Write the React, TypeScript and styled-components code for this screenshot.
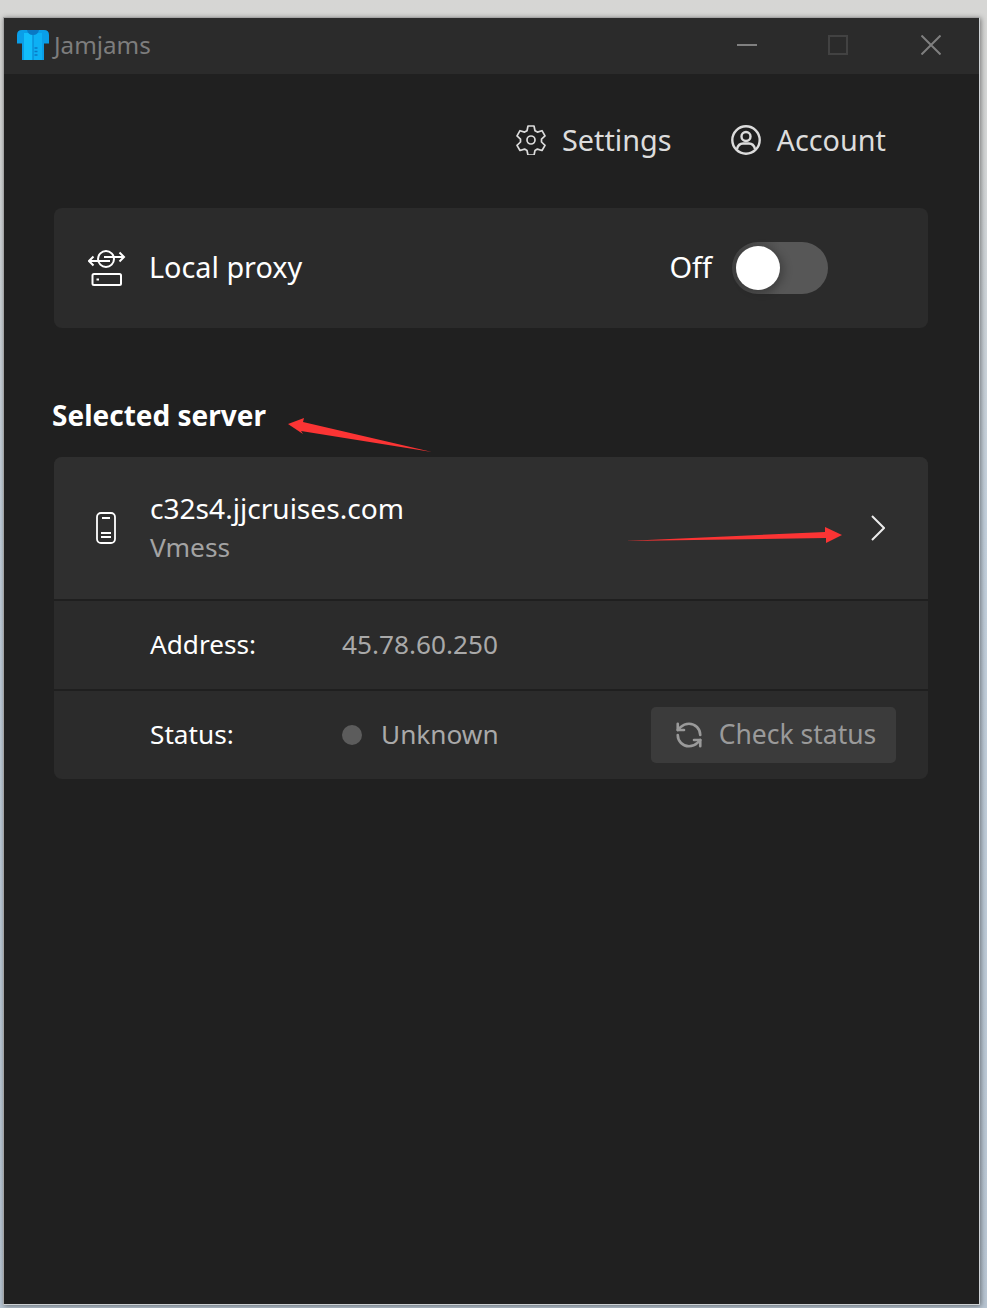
import { createGlobalStyle, styled } from 'styled-components'
import { RefreshCw } from 'lucide-react'

const GlobalStyle = createGlobalStyle`
  html, body {
    margin: 0;
    padding: 0;
  }
  body {
    font-family: "Noto Sans", "Open Sans", sans-serif;
    background: linear-gradient(180deg, #d6d6d4 0%, #d4d6d6 12%, #c2cfdb 40%, #b8c5d2 100%);
  }
`

const Backdrop = styled.div`
  box-sizing: border-box;
  width: 987px;
  height: 1308px;
  padding: 17px 7px 3px 3px;
  overflow: hidden;
`

const Window = styled.div`
  position: relative;
  box-sizing: border-box;
  height: 100%;
  border: 1px solid #a4a4a4;
  border-right-color: #cfd3d6;
  border-bottom-color: #cfd3d6;
  background: #202020;
  box-shadow: 1px 1px 5px rgba(0, 0, 0, 0.45);
  display: flex;
  flex-direction: column;
`

const TitleBar = styled.header`
  box-sizing: border-box;
  height: 56px;
  flex: none;
  background: #2b2b2b;
  display: flex;
  align-items: center;
  padding: 0 0 2px 13px;
`

const AppName = styled.span`
  margin: 0 0 2px 5px;
  font-size: 24.2px;
  color: #7d7d7d;
`

const WindowControls = styled.div`
  margin-left: auto;
  display: flex;
  align-items: center;
  padding-right: 38px;
  gap: 71px;
`

const CloseSlot = styled.div`
  display: flex;
  margin-left: 2px;
`

const Nav = styled.nav`
  box-sizing: border-box;
  display: flex;
  justify-content: flex-end;
  align-items: center;
  height: 134px;
  padding: 0 93px 2px 0;
  gap: 59px;
  flex: none;
`

const NavItem = styled.div`
  display: flex;
  align-items: center;
  gap: 16px;
  font-size: 28.8px;
  color: #dcdcdc;
`

const NavLabel = styled.span`
  margin-bottom: 2px;
`

const Main = styled.main`
  padding: 0 51px 0 50px;
  display: flex;
  flex-direction: column;
`

const Card = styled.section`
  border-radius: 8px;
  overflow: hidden;
  background: #2b2b2b;
`

const ProxyRow = styled.div`
  height: 120px;
  display: flex;
  align-items: center;
  padding: 0 100px 0 34px;
`

const RowLabel = styled.span`
  margin: 0 0 4px 23px;
  font-size: 28.8px;
  color: #ffffff;
`

const ToggleState = styled.span`
  margin: 0 20px 4px auto;
  font-size: 29px;
  color: #ffffff;
`

const Toggle = styled.div`
  width: 96px;
  height: 52px;
  box-sizing: border-box;
  border-radius: 26px;
  padding: 4px;
  background: linear-gradient(90deg, #3f3f3f 0%, #575757 50%);
`

const ToggleKnob = styled.div`
  width: 44px;
  height: 44px;
  border-radius: 50%;
  background: #ffffff;
  box-shadow: 4px 2px 8px rgba(0, 0, 0, 0.25);
`

const SectionTitle = styled.h2`
  margin: 66px 0 20px -2px;
  height: 43px;
  line-height: 43px;
  font-size: 28px;
  font-weight: 700;
  color: #ffffff;
`

const ServerRow = styled.div`
  height: 142px;
  background: #2f2f2f;
  display: flex;
  align-items: center;
  padding: 0 43px 0 42px;
`

const ServerText = styled.div`
  margin: 0 0 3px 34px;
  display: flex;
  flex-direction: column;
`

const ServerName = styled.div`
  font-size: 28.1px;
  line-height: 40px;
  color: #ffffff;
`

const ServerProtocol = styled.div`
  font-size: 26.3px;
  line-height: 38px;
  color: #a3a3a3;
`

const ChevronWrap = styled.div`
  margin-left: auto;
  display: flex;
`

const DetailRow = styled.div`
  border-top: 2px solid #1f1f1f;
  height: 88px;
  display: flex;
  align-items: center;
  padding: 0 32px 0 96px;
`

const DetailLabel = styled.span`
  width: 192px;
  flex: none;
  margin-bottom: 2px;
  font-size: 26.2px;
  color: #ffffff;
`

const DetailValue = styled.span`
  margin-bottom: 2px;
  font-size: 26.2px;
  color: #a9a9a9;
`

const StatusDot = styled.span`
  width: 20px;
  height: 20px;
  border-radius: 50%;
  background: #5c5c5c;
  margin-right: 19px;
  flex: none;
`

const CheckButton = styled.button`
  margin-left: auto;
  height: 56px;
  width: 245px;
  border: 0;
  border-radius: 5px;
  background: #3b3b3b;
  color: #9a9a9a;
  font-family: inherit;
  font-size: 26.5px;
  display: flex;
  align-items: center;
  justify-content: center;
  gap: 15px;
  padding: 0 0 0 3px;
`

const ButtonText = styled.span`
  margin-bottom: 2px;
`

const SyncIcon = styled(RefreshCw)`
  transform: scaleX(-1);
`

const Annotations = styled.svg`
  position: absolute;
  left: -1px;
  top: -1px;
  pointer-events: none;
`

const ShirtIcon = () => (
  <svg width="32" height="30" viewBox="0 0 32 30">
    <path d="M5 0h22q5 0 5 5v8.500h-5V30H5V13.500H0V5q0-5 5-5z" fill="#0a9ee8" />
    <path d="M7 3h9v27H7z" fill="#12bdfb" />
    <path d="M16 3h9v27h-9z" fill="#0db0f4" />
    <path d="M10 0h12q-1 5-6 5t-6-5z" fill="#0a78c4" />
    <path d="M16 5v25" stroke="#0a86d0" strokeWidth="1.200" />
    <path d="M17.500 18h3M17.500 21.500h3M17.500 25h3" stroke="#0a78c4" strokeWidth="1.500" />
  </svg>
)

const MinimizeIcon = () => (
  <svg width="20" height="20" viewBox="0 0 20 20">
    <rect x="0" y="9" width="20" height="2" fill="#808080" />
  </svg>
)

const MaximizeIcon = () => (
  <svg width="20" height="20" viewBox="0 0 20 20">
    <rect x="1" y="1" width="18" height="18" fill="none" stroke="#424242" strokeWidth="2" />
  </svg>
)

const CloseIcon = () => (
  <svg width="20" height="20" viewBox="0 0 20 20">
    <path d="M0.500 0.500l19 19M19.500 0.500l-19 19" stroke="#7f7f7f" strokeWidth="2" />
  </svg>
)

const GearIcon = () => (
  <svg width="30" height="30" viewBox="1 1 30 30" fill="none" stroke="#dcdcdc" strokeWidth="1.700" strokeLinejoin="round">
    <path d="M13 2h6l1 4.700 2.400 1.400 4.600-1.400 3 5.200-3.500 3.300v2.800l3.500 3.300-3 5.200-4.600-1.400-2.400 1.400-1 4.700h-6l-1-4.700-2.400-1.400-4.600 1.400-3-5.200 3.500-3.300v-2.800l-3.500-3.300 3-5.200 4.600 1.400L12 6.700z" />
    <circle cx="16" cy="16" r="4" />
  </svg>
)

const AccountIcon = () => (
  <svg width="30" height="30" viewBox="1 1 30 30" fill="none" stroke="#dcdcdc" strokeWidth="2.400">
    <circle cx="16" cy="16" r="13.700" />
    <circle cx="16" cy="12.500" r="4.500" />
    <path d="M7 25c1-4 4-5.500 6-5.500h6c2 0 5 1.500 6 5.500" />
  </svg>
)

const ProxyIcon = () => (
  <svg width="38" height="36" viewBox="0 0 38 36" fill="none" stroke="#ffffff" strokeWidth="2">
    <circle cx="18" cy="9" r="8" />
    <path d="M1 11h21M5.500 6.500L1 11l4.500 4.500M16 7h20M31.500 2.500L36 7l-4.500 4.500" />
    <rect x="4.500" y="24" width="28.500" height="11" rx="1.500" />
    <path d="M8.500 29.500h2.500" />
  </svg>
)

const PhoneIcon = () => (
  <svg width="20" height="32" viewBox="0 0 20 32" fill="none" stroke="#ffffff" strokeWidth="1.800">
    <rect x="1" y="1" width="18" height="30" rx="4" />
    <path d="M6 6h8M5 21h10M5 25h10" />
  </svg>
)

const ChevronIcon = () => (
  <svg width="14" height="26" viewBox="0 0 14 26" fill="none" stroke="#ececec" strokeWidth="2">
    <path d="M1 1l12 12L1 25" />
  </svg>
)

export default function App() {
  return (
    <Backdrop>
      <GlobalStyle />
      <Window>
        <TitleBar>
          <ShirtIcon />
          <AppName>Jamjams</AppName>
          <WindowControls>
            <MinimizeIcon />
            <MaximizeIcon />
            <CloseSlot>
              <CloseIcon />
            </CloseSlot>
          </WindowControls>
        </TitleBar>

        <Nav>
          <NavItem>
            <GearIcon />
            <NavLabel>Settings</NavLabel>
          </NavItem>
          <NavItem>
            <AccountIcon />
            <NavLabel>Account</NavLabel>
          </NavItem>
        </Nav>

        <Main>
          <Card>
            <ProxyRow>
              <ProxyIcon />
              <RowLabel>Local proxy</RowLabel>
              <ToggleState>Off</ToggleState>
              <Toggle>
                <ToggleKnob />
              </Toggle>
            </ProxyRow>
          </Card>

          <SectionTitle>Selected server</SectionTitle>

          <Card>
            <ServerRow>
              <PhoneIcon />
              <ServerText>
                <ServerName>c32s4.jjcruises.com</ServerName>
                <ServerProtocol>Vmess</ServerProtocol>
              </ServerText>
              <ChevronWrap>
                <ChevronIcon />
              </ChevronWrap>
            </ServerRow>
            <DetailRow>
              <DetailLabel>Address:</DetailLabel>
              <DetailValue>45.78.60.250</DetailValue>
            </DetailRow>
            <DetailRow>
              <DetailLabel>Status:</DetailLabel>
              <StatusDot />
              <DetailValue>Unknown</DetailValue>
              <CheckButton>
                <SyncIcon size={30} strokeWidth={2.1} color="#9a9a9a" />
                <ButtonText>Check status</ButtonText>
              </CheckButton>
            </DetailRow>
          </Card>
        </Main>

        {/* red arrows someone drew on top of the screenshot */}
        <Annotations width="976" height="600" viewBox="3 17 976 600">
          <path d="M288 424L304 418L303 422L432 452L301 431L303 434Z" fill="#fb3434" />
          <path d="M625 541L825 532L825 527L842 535L826 543L826 538Z" fill="#fb3434" />
        </Annotations>
      </Window>
    </Backdrop>
  )
}
